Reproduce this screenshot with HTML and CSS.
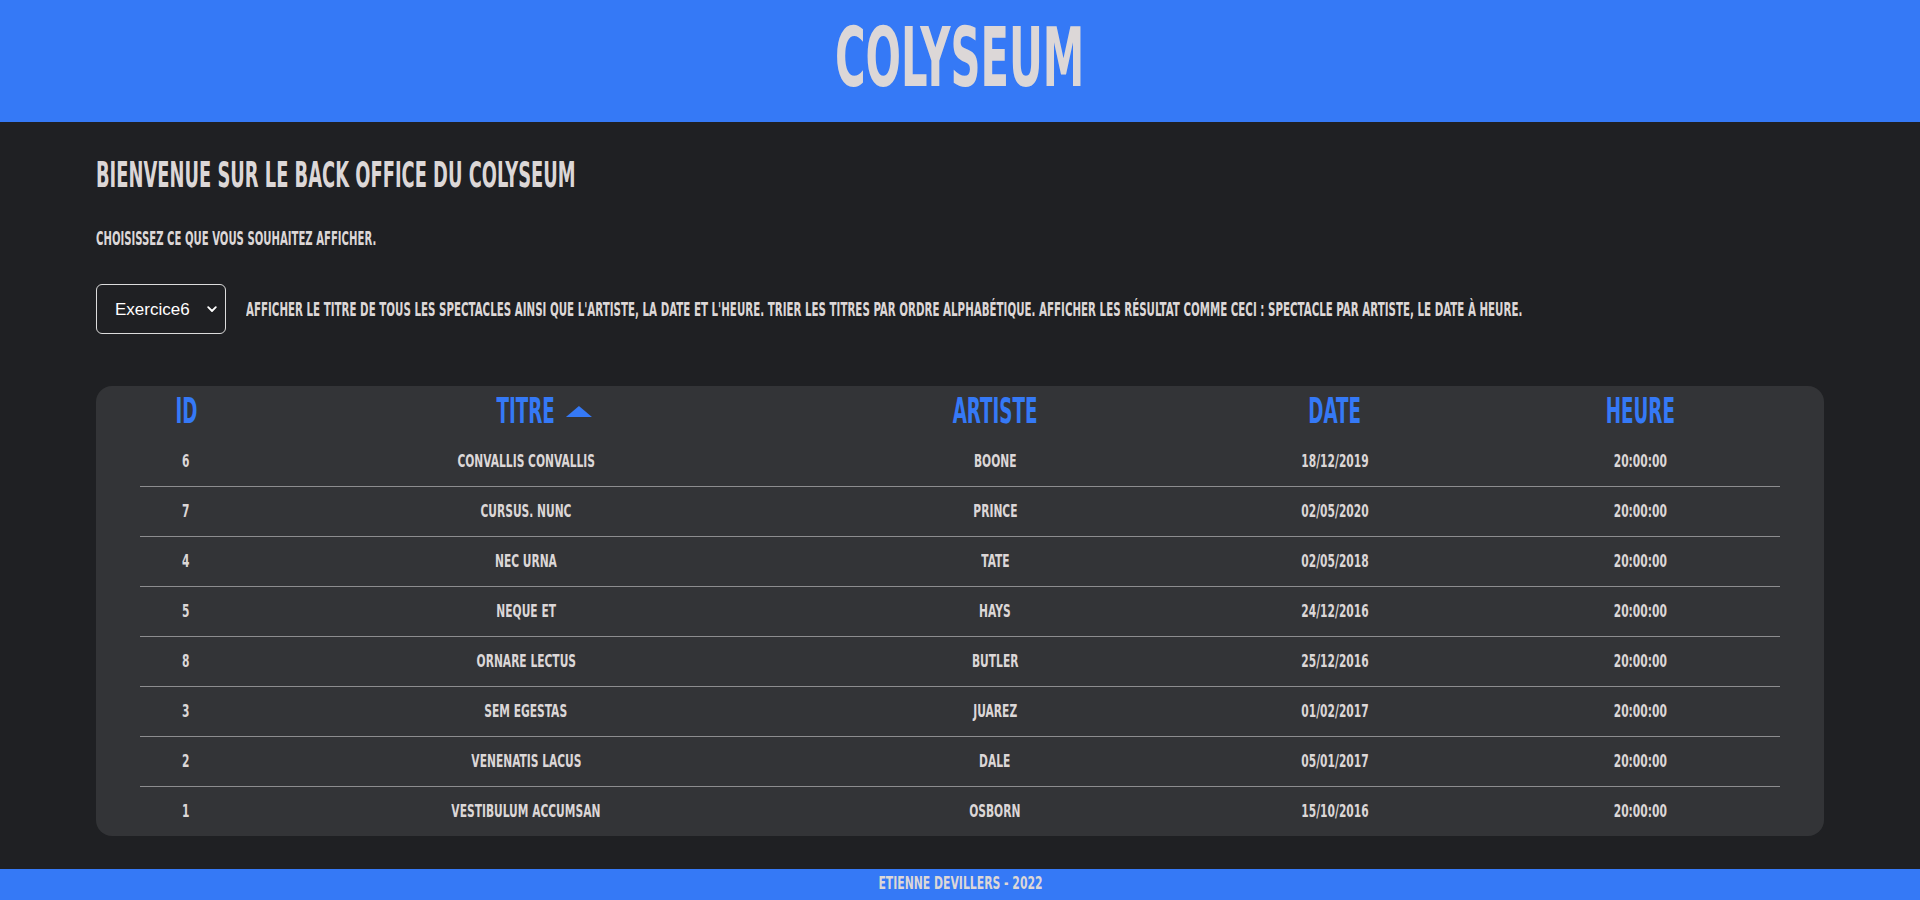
FILE: index.html
```html
<!DOCTYPE html>
<html lang="fr">
<head>
<meta charset="utf-8">
<title>Colyseum - Back office</title>
<link rel="stylesheet" href="styles.css">
</head>
<body>
<header class="site-header">
  <h1 class="logo">Colyseum</h1>
</header>
<main class="content">
  <h2 class="welcome">Bienvenue sur le back office du Colyseum</h2>
  <p class="choose">Choisissez ce que vous souhaitez afficher.</p>
  <div class="exercise-row">
    <div class="select-wrap">
      <select class="exercise-select">
        <option>Exercice6</option>
      </select>
      <svg class="chevron" width="10" height="7" viewBox="0 0 10 7"><path d="M1.2 1.2 L5 5 L8.8 1.2" fill="none" stroke="#ffffff" stroke-width="1.8" stroke-linecap="round" stroke-linejoin="round"/></svg>
    </div>
    <p class="exercise-desc">Afficher le titre de tous les spectacles ainsi que l'artiste, la date et l'heure. Trier les titres par ordre alphabétique. Afficher les résultat comme ceci : Spectacle par artiste, le date à heure.</p>
  </div>
  <div class="table-card">
    <table class="shows">
      <thead>
        <tr>
          <th class="col-id"><span class="head">ID</span></th>
          <th class="col-title"><span class="head">Titre<span class="sort-up"></span></span></th>
          <th class="col-artist"><span class="head">Artiste</span></th>
          <th class="col-date"><span class="head">Date</span></th>
          <th class="col-hour"><span class="head">Heure</span></th>
        </tr>
      </thead>
      <tbody>
        <tr><td><span class="cell">6</span></td><td><span class="cell">Convallis convallis</span></td><td><span class="cell">Boone</span></td><td><span class="cell">18/12/2019</span></td><td><span class="cell">20:00:00</span></td></tr>
        <tr><td><span class="cell">7</span></td><td><span class="cell">Cursus. Nunc</span></td><td><span class="cell">Prince</span></td><td><span class="cell">02/05/2020</span></td><td><span class="cell">20:00:00</span></td></tr>
        <tr><td><span class="cell">4</span></td><td><span class="cell">Nec urna</span></td><td><span class="cell">Tate</span></td><td><span class="cell">02/05/2018</span></td><td><span class="cell">20:00:00</span></td></tr>
        <tr><td><span class="cell">5</span></td><td><span class="cell">Neque et</span></td><td><span class="cell">Hays</span></td><td><span class="cell">24/12/2016</span></td><td><span class="cell">20:00:00</span></td></tr>
        <tr><td><span class="cell">8</span></td><td><span class="cell">Ornare lectus</span></td><td><span class="cell">Butler</span></td><td><span class="cell">25/12/2016</span></td><td><span class="cell">20:00:00</span></td></tr>
        <tr><td><span class="cell">3</span></td><td><span class="cell">Sem egestas</span></td><td><span class="cell">Juarez</span></td><td><span class="cell">01/02/2017</span></td><td><span class="cell">20:00:00</span></td></tr>
        <tr><td><span class="cell">2</span></td><td><span class="cell">Venenatis lacus</span></td><td><span class="cell">Dale</span></td><td><span class="cell">05/01/2017</span></td><td><span class="cell">20:00:00</span></td></tr>
        <tr><td><span class="cell">1</span></td><td><span class="cell">Vestibulum accumsan</span></td><td><span class="cell">Osborn</span></td><td><span class="cell">15/10/2016</span></td><td><span class="cell">20:00:00</span></td></tr>
      </tbody>
    </table>
  </div>
</main>
<footer class="site-footer"><span class="footer-text">Etienne Devillers - 2022</span></footer>
</body>
</html>
```
FILE: styles.css
```css
* { box-sizing: border-box; }

html, body {
  margin: 0;
  padding: 0;
}

body {
  background: #1f2023;
  color: #dcd7d7;
  font-family: "DejaVu Sans Condensed", "DejaVu Sans", sans-serif;
  font-weight: 700;
  text-transform: uppercase;
  overflow-x: hidden;
}

.site-header {
  height: 122px;
  background: #3579f6;
  display: flex;
  align-items: center;
  justify-content: center;
}

.logo {
  margin: 0 0 7px;
  font-size: 82px;
  line-height: 1;
  font-weight: 700;
  white-space: nowrap;
  transform: scaleX(0.565);
}

.content {
  padding: 35px 96px 33px;
}

.welcome {
  margin: 0;
  font-size: 36px;
  line-height: 36px;
  font-weight: 700;
  white-space: nowrap;
  transform: scaleX(0.552);
  transform-origin: left center;
}

.choose {
  margin: 35px 0 0;
  font-size: 20px;
  line-height: 20px;
  white-space: nowrap;
  transform: scaleX(0.562);
  transform-origin: left center;
}

.exercise-row {
  margin-top: 36px;
  display: flex;
  align-items: center;
  gap: 20px;
}

.select-wrap {
  position: relative;
  flex: none;
}

.exercise-select {
  appearance: none;
  -webkit-appearance: none;
  display: block;
  width: 130px;
  height: 50px;
  padding: 0 0 0 18px;
  background: #1f2023;
  color: #ffffff;
  border: 1px solid #dcdcdc;
  border-radius: 6px;
  font-family: "Liberation Sans", Arial, sans-serif;
  font-weight: 400;
  font-size: 17px;
  text-transform: none;
}

.chevron {
  position: absolute;
  right: 9px;
  top: 22px;
  pointer-events: none;
}

.exercise-desc {
  flex: 1;
  min-width: 0;
  margin: 0;
  font-size: 19px;
  line-height: 20px;
  white-space: nowrap;
  transform: scaleX(0.602);
  transform-origin: left center;
}

.table-card {
  margin-top: 52px;
  background: #333437;
  border-radius: 16px;
  padding: 0 44px;
}

.shows {
  width: 100%;
  border-collapse: collapse;
  table-layout: fixed;
}

.shows th {
  height: 50px;
  padding: 0;
  color: #3579f6;
  font-size: 36px;
  line-height: 1;
  font-weight: 700;
  text-align: center;
  vertical-align: middle;
}

.head {
  position: relative;
  display: inline-block;
  white-space: nowrap;
  transform: scaleX(0.565);
}

.col-id { width: 92px; }
.col-title { width: 588px; }
.col-artist { width: 350px; }
.col-date { width: 330px; }
.col-hour { width: 280px; }

.sort-up {
  position: absolute;
  left: 100%;
  top: 13px;
  width: 0;
  height: 0;
  margin-left: 20px;
  border-left: 23px solid transparent;
  border-right: 23px solid transparent;
  border-bottom: 11px solid #3579f6;
}

.shows td {
  height: 50px;
  padding: 0;
  font-size: 18px;
  line-height: 1;
  text-align: center;
  vertical-align: middle;
}

.cell {
  display: inline-block;
  white-space: nowrap;
  transform: scaleX(0.66);
}

.shows tbody tr {
  border-bottom: 1px solid #8d8d8f;
}

.shows tbody tr:last-child {
  border-bottom: none;
}

.site-footer {
  height: 31px;
  padding-bottom: 4px;
  background: #3579f6;
  text-align: center;
  font-size: 18px;
  line-height: 27px;
  color: #dcd7d7;
}

.footer-text {
  display: inline-block;
  transform: scaleX(0.67);
}
```
